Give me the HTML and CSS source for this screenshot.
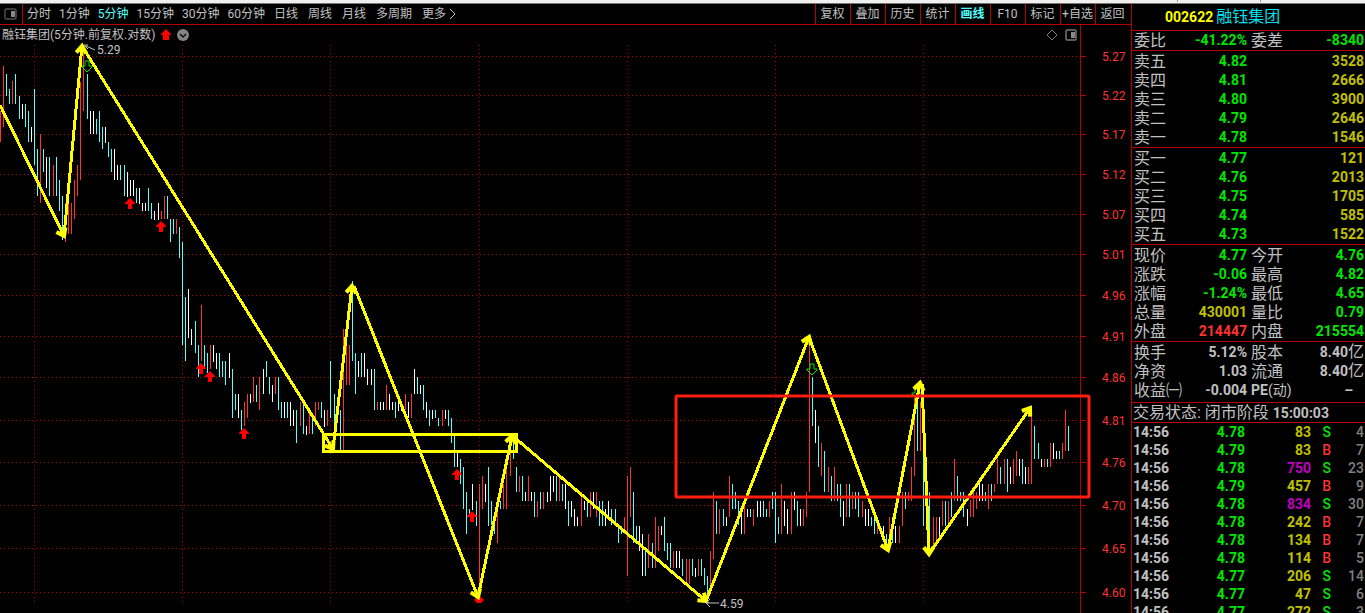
FILE: index.html
```html
<!DOCTYPE html>
<html lang="zh-CN">
<head>
<meta charset="utf-8">
<title>融钰集团 002622</title>
<link rel="stylesheet" href="styles.css">
</head>
<body>
<div class="strip"><i class="notch"></i><i class="notch"></i></div>
<div class="app">
  <main class="main">
    <nav class="toolbar">
      <button class="panel-btn" aria-label="面板"><svg width="14" height="12" viewBox="0 0 14 12"><rect x="1" y="1" width="11" height="10" rx="1" fill="none" stroke="#777"/><rect x="7" y="3" width="4" height="6" fill="#888"/></svg></button>
      <div class="periods minutes">
        <button>分时</button><button>1分钟</button><button class="active">5分钟</button><button>15分钟</button><button>30分钟</button><button>60分钟</button>
      </div>
      <div class="periods days">
        <button>日线</button><button>周线</button><button>月线</button><button>多周期</button><button class="more">更多<svg width="7" height="10" viewBox="0 0 7 10"><path d="M1 0l5 5-5 5" fill="none" stroke="#c0c0c0"/></svg></button>
      </div>
      <div class="tools">
        <button>复权</button><button>叠加</button><button>历史</button><button>统计</button><button class="active strong">画线</button><button>F10</button><button>标记</button><button>+自选</button><button>返回</button>
      </div>
    </nav>
    <header class="chart-head">
      <div class="chart-title">
        <span>融钰集团(5分钟.前复权.对数)</span>
        <svg width="10" height="12" viewBox="0 0 10 12"><path d="M5 0l5 5v1H8v5H2V6H0V5z" fill="#f00"/></svg>
        <svg width="12" height="12" viewBox="0 0 12 12"><circle cx="6" cy="6" r="6" fill="#858585"/><path d="M3 5l3 3 3-3" fill="none" stroke="#111" stroke-width="1.5"/></svg>
        <span class="head-icons">
          <svg width="12" height="12" viewBox="0 0 12 12"><path d="M6 1l5 5-5 5-5-5z" fill="none" stroke="#777"/></svg>
          <svg width="12" height="12" viewBox="0 0 12 12"><rect x="1" y="1" width="10" height="10" rx="1" fill="none" stroke="#777" stroke-width="1.5"/><rect x="6" y="3" width="4" height="6" fill="#888"/></svg>
        </span>
      </div>
    </header>
    <svg class="chart" viewBox="0 45 1131 568">
      <defs>
        <marker id="head" orient="auto" markerUnits="userSpaceOnUse" markerWidth="20" markerHeight="20" viewBox="-10 -10 20 20">
          <path d="M-7 -5L0 0L-7 5" fill="none" stroke="#ff0" stroke-width="4"/>
        </marker>
        <path id="up" d="M0 0l5 5v1h-3v5h-4v-5h-3v-1z"/>
        <path id="down" d="M-2 0h4v5h3v1l-5 5-5-5v-1h3z"/>
      </defs>
      <g id="grid"></g>
      <g id="axis"></g>
      <g id="bars"></g>
      <g class="buy">
        <use href="#up" x="130" y="198"/><use href="#up" x="161" y="221"/><use href="#up" x="201" y="363"/><use href="#up" x="210" y="371"/><use href="#up" x="244" y="428"/><use href="#up" x="457" y="469"/><use href="#up" x="472" y="511"/><path d="M474 600l5-5 5 5-3 3h-4z"/>
      </g>
      <g class="sell">
        <use href="#down" x="87" y="61"/><use href="#down" x="812" y="364"/><use href="#down" x="917" y="388"/>
      </g>
      <g class="trend">
        <path d="M0 105L64 236"/><path d="M64 236L82 46"/><path d="M82 46L333 449"/><path d="M333 449L352 286"/><path d="M354 286L478 597"/><path d="M478 597L512 436"/><path d="M514 437L706 601"/><path d="M706 601L809 337"/><path d="M809 337L888 550"/><path d="M888 550L920 383"/><path d="M922 384L929 554"/><path d="M929 554L1030 408"/>
      </g>
      <rect class="box-yellow" x="323" y="434" width="193" height="17"/>
      <rect class="box-red" x="676" y="396" width="413" height="101" rx="1"/>
      <g class="note">
        <path d="M84 45h4M84 45l4 4M86 46l9 4M706 603h13M710 599l-4 4 4 4"/>
        <text x="97" y="54">5.29</text><text x="720" y="608">4.59</text>
      </g>
    </svg>
  </main>
  <aside class="side">
    <h1 class="stock"><b>002622</b><span>融钰集团</span></h1>
    <table class="quotes ratio">
      <tr><th>委比</th><td class="g">-41.22%</td><th>委差</th><td class="g">-8340</td></tr>
    </table>
    <table class="quotes">
      <tr><th>卖五</th><td class="g">4.82</td><th></th><td class="y">3528</td></tr>
      <tr><th>卖四</th><td class="g">4.81</td><th></th><td class="y">2666</td></tr>
      <tr><th>卖三</th><td class="g">4.80</td><th></th><td class="y">3900</td></tr>
      <tr><th>卖二</th><td class="g">4.79</td><th></th><td class="y">2646</td></tr>
      <tr><th>卖一</th><td class="g">4.78</td><th></th><td class="y">1546</td></tr>
    </table>
    <table class="quotes">
      <tr><th>买一</th><td class="g">4.77</td><th></th><td class="y">121</td></tr>
      <tr><th>买二</th><td class="g">4.76</td><th></th><td class="y">2013</td></tr>
      <tr><th>买三</th><td class="g">4.75</td><th></th><td class="y">1705</td></tr>
      <tr><th>买四</th><td class="g">4.74</td><th></th><td class="y">585</td></tr>
      <tr><th>买五</th><td class="g">4.73</td><th></th><td class="y">1522</td></tr>
    </table>
    <table class="quotes">
      <tr><th>现价</th><td class="g">4.77</td><th>今开</th><td class="g">4.76</td></tr>
      <tr><th>涨跌</th><td class="g">-0.06</td><th>最高</th><td class="g">4.82</td></tr>
      <tr><th>涨幅</th><td class="g">-1.24%</td><th>最低</th><td class="g">4.65</td></tr>
      <tr><th>总量</th><td class="y">430001</td><th>量比</th><td class="g">0.79</td></tr>
      <tr><th>外盘</th><td class="r">214447</td><th>内盘</th><td class="g">215554</td></tr>
    </table>
    <table class="quotes last">
      <tr><th>换手</th><td>5.12%</td><th>股本</th><td>8.40<span class="unit">亿</span></td></tr>
      <tr><th>净资</th><td>1.03</td><th>流通</th><td>8.40<span class="unit">亿</span></td></tr>
      <tr><th>收益㈠</th><td>-0.004</td><th class="pe"><b>PE</b>(动)</th><td class="none">–</td></tr>
    </table>
    <p class="status">交易状态: 闭市阶段 <b>15:00:03</b></p>
    <table class="ticks">
      <tr><td>14:56</td><td>4.78</td><td>83</td><td class="g">S</td><td>4</td></tr>
      <tr><td>14:56</td><td>4.79</td><td>83</td><td class="r">B</td><td>7</td></tr>
      <tr><td>14:56</td><td>4.78</td><td class="m">750</td><td class="g">S</td><td>23</td></tr>
      <tr><td>14:56</td><td>4.79</td><td>457</td><td class="r">B</td><td>9</td></tr>
      <tr><td>14:56</td><td>4.78</td><td class="m">834</td><td class="g">S</td><td>30</td></tr>
      <tr><td>14:56</td><td>4.78</td><td>242</td><td class="r">B</td><td>7</td></tr>
      <tr><td>14:56</td><td>4.78</td><td>134</td><td class="r">B</td><td>7</td></tr>
      <tr><td>14:56</td><td>4.78</td><td>114</td><td class="r">B</td><td>5</td></tr>
      <tr><td>14:56</td><td>4.77</td><td>206</td><td class="g">S</td><td>14</td></tr>
      <tr><td>14:56</td><td>4.77</td><td>47</td><td class="g">S</td><td>6</td></tr>
      <tr><td>14:56</td><td>4.77</td><td>272</td><td class="g">S</td><td>3</td></tr>
    </table>
  </aside>
</div>
<script src="chart.js"></script>
</body>
</html>
```
FILE: styles.css
```css
* { box-sizing: border-box; }
body {
  margin: 0;
  height: 100vh;
  overflow: hidden;
  display: flex;
  flex-direction: column;
  background: #000;
  color: #c0c0c0;
  font: 12px/16px Roboto, "Noto Sans CJK SC", sans-serif;
}
button {
  margin: 0;
  padding: 0;
  border: 0;
  background: none;
  color: inherit;
  font: inherit;
  white-space: nowrap;
}
.strip {
  flex: none;
  height: 4px;
  background: #f0f0f0;
  border-bottom: 1px solid #777;
  display: flex;
  justify-content: flex-end;
  gap: 82px;
  padding-right: 104px;
}
.notch { width: 1px; height: 2px; background: #999; }
.app { flex: 1; min-height: 0; display: flex; }
.main { flex: 1; min-width: 0; display: flex; flex-direction: column; }

.toolbar {
  flex: none;
  height: 21px;
  display: flex;
  border-bottom: 1px solid #b40000;
}
.panel-btn {
  width: 23px;
  border-right: 1px solid #b40000;
  display: flex;
  align-items: center;
  justify-content: center;
}
.periods { display: flex; }
.minutes { gap: 8px; padding-left: 4px; }
.days { gap: 10px; padding-left: 9px; }
.more { display: flex; align-items: center; gap: 3px; }
.tools { margin-left: auto; padding-right: 1px; display: flex; }
.tools button { width: 35px; padding-right: 1px; border-left: 1px solid #b40000; }
.active { color: #54ffff; }
.strong { font-weight: bold; }

.chart-head { flex: none; height: 20px; padding-right: 50px; }
.chart-title {
  height: 20px;
  display: flex;
  align-items: center;
  gap: 6px;
  padding: 0 3px 0 2px;
  border-right: 1px solid #b40000;
}
.head-icons { margin-left: auto; display: flex; gap: 7px; }

.chart { display: block; width: 100%; height: auto; overflow: visible; }
#grid, #axis, #bars, .trend, .box-yellow { shape-rendering: crispEdges; }
.dots { stroke: #b00000; stroke-width: 1; stroke-dasharray: 1 3; }
.line { fill: #b40000; }
.price { fill: #ff3232; }
.bar-r { fill: #ff3232; }
.bar-c { fill: #54ffff; }
.bar-w { fill: #fff; }
.buy { fill: #f00; }
.sell { fill: none; stroke: #00e600; }
.trend { stroke: #ff0; stroke-width: 3; }
.trend path { marker-end: url(#head); }
.box-yellow { fill: none; stroke: #ff0; stroke-width: 3; }
.box-red { fill: none; stroke: #ff1e10; stroke-width: 3; }
.note { fill: #c0c0c0; }
.note path { fill: none; stroke: #c0c0c0; }

.side {
  flex: none;
  width: 234px;
  border-left: 1px solid #b40000;
  overflow: hidden;
}
.stock {
  margin: 0;
  height: 26px;
  padding-left: 33px;
  display: flex;
  align-items: center;
  gap: 3px;
  font-size: 16px;
  font-weight: normal;
  color: #00e0f0;
}
.stock b { font-size: 14px; color: #ff0; }
.quotes, .ticks {
  width: 100%;
  table-layout: fixed;
  border-collapse: separate;
  border-spacing: 0;
  border-top: 1px solid #b40000;
}
.quotes { padding: 1px 0 0; }
.ratio { padding: 0; }
.last { padding-bottom: 2px; }
.quotes th, .quotes td {
  height: 19px;
  padding: 0;
  line-height: 19px;
  white-space: nowrap;
}
.quotes th {
  width: 40px;
  padding-left: 4px;
  font-size: 16px;
  font-weight: normal;
  text-align: left;
}
.quotes th:first-child { width: 50px; padding-left: 2px; }
.quotes td:nth-child(2) { width: 65px; }
.quotes td {
  padding-right: 1px;
  font-size: 14px;
  font-weight: bold;
  text-align: right;
}
.quotes td:nth-child(2) { padding-right: 0; }
.quotes .unit { font-size: 16px; font-weight: normal; line-height: 1; }
.quotes .pe { font-size: 14px; }
.quotes .none { padding-right: 12px; }
.status {
  margin: 0;
  height: 20px;
  padding-left: 1px;
  border-top: 1px solid #b40000;
  font-size: 16px;
  line-height: 19px;
  white-space: nowrap;
}
.status b { font-size: 14px; }
.ticks td {
  height: 18px;
  padding: 0;
  font-size: 14px;
  font-weight: bold;
  line-height: 18px;
  text-align: right;
}
.ticks td:nth-child(1) { width: 48px; padding-left: 1px; text-align: left; }
.ticks td:nth-child(2) { width: 65px; color: #00e600; }
.ticks td:nth-child(3) { width: 66px; color: #c0c000; }
.ticks td:nth-child(4) { width: 20px; font-weight: 500; }
.ticks td:nth-child(5) { padding-right: 1px; color: #808080; font-weight: 500; }
.quotes .g, .ticks .g { color: #00e600; }
.quotes .y { color: #c0c000; }
.quotes .r, .ticks .r { color: #ff3232; }
.ticks td.m { color: #c000c0; }
```
FILE: chart.js
```js
const NS = "http://www.w3.org/2000/svg";
function add(parent, name, attrs, text) {
  const el = document.createElementNS(NS, name);
  for (const key in attrs) el.setAttribute(key, attrs[key]);
  if (text) el.textContent = text;
  parent.appendChild(el);
}

const grid = document.getElementById("grid");
const axis = document.getElementById("axis");
const levels = [[56, "5.27"], [95, "5.22"], [134, "5.17"], [174, "5.12"], [214, "5.07"], [254, "5.01"], [295, "4.96"],
  [336, "4.91"], [377, "4.86"], [420, "4.81"], [462, "4.76"], [505, "4.70"], [548, "4.65"], [592, "4.60"]];
add(axis, "rect", { x: 1080, y: 45, width: 1, height: 568, class: "line" });
for (const [y, label] of levels) {
  add(grid, "path", { d: `M0 ${y + 0.5}H1080`, class: "dots" });
  add(axis, "rect", { x: 1081, y, width: 5, height: 1, class: "line" });
  add(axis, "text", { x: 1102, y: y + 5, class: "price" }, label);
}
for (const x of [34, 182, 330, 479, 627, 775, 923]) {
  add(grid, "path", { d: `M${x + 0.5} 45V603`, class: "dots" });
}

// colour, x, high, low
const data = `r0,111,142 r3,66,127 c6,74,96 c9,89,104 r12,81,104 c15,74,104 c19,96,119 w22,104,119 c25,104,127 c28,111,142 w31,127,142
c34,89,165 c37,149,196 r40,134,203 c43,149,172 w46,157,188 c49,157,196 r53,165,196 c56,157,196 c59,180,211 c62,196,240 r65,203,242
r68,203,234 r71,203,234 r74,180,219 r77,165,196 r80,82,180 r83,50,111 c87,74,119 w90,111,134 w93,111,134 c96,119,134 c99,111,142
c102,127,149 w105,127,143 c108,142,157 c111,149,172 w114,149,180 w117,165,180 c120,165,180 c124,165,196 w127,172,197 w130,180,196
w133,180,196 c136,188,203 w139,188,204 w142,203,211 w145,203,211 c148,188,211 c151,203,219 w154,211,220 w158,203,220 r161,211,219
r164,196,219 c167,196,219 c170,219,242 c173,219,234 r176,219,234 c179,227,258 c182,242,345 c185,297,361 w188,289,338 w191,329,345
c195,321,353 c198,345,377 r201,305,361 c204,345,367 c207,353,373 r210,345,369 w213,345,362 w216,353,369 c219,353,377 c222,361,377
c225,361,385 w229,353,378 c232,369,418 c235,394,410 w238,394,418 c241,410,430 r244,402,426 r247,394,418 w250,394,403 r253,377,402
c256,385,402 r259,377,410 w263,369,394 c266,361,377 c269,377,394 w272,385,402 r275,377,394 c278,377,410 c281,402,418 w284,402,418
c287,402,418 w290,402,426 w293,410,426 c296,410,443 r300,402,426 c303,402,434 w306,426,435 r309,410,434 c312,418,434 r315,402,426
r318,402,410 c321,402,418 w324,410,427 r327,410,426 c330,361,418 c334,394,430 c340,410,450 r343,329,450 r346,337,385 r349,345,385
c352,281,361 c355,353,394 w358,361,377 c361,353,377 w364,353,377 w367,369,385 w371,369,385 c374,369,410 r377,402,410 w380,402,410
w383,402,410 r386,385,410 w389,394,410 w392,402,410 c395,402,418 w398,402,411 w401,402,411 r405,394,410 w408,402,418 r411,394,418
w414,369,394 c417,377,394 w420,385,394 c423,385,410 w426,402,418 c429,410,426 w432,410,419 c435,410,418 c438,418,426 r442,410,426
w445,410,419 c448,410,426 c451,418,443 c454,434,467 w457,453,467 c460,459,484 c463,467,509 c466,492,534 c469,509,517 w472,484,510
c476,501,526 r479,484,590 r482,476,509 w485,484,502 c488,467,526 c491,501,525 c494,517,534 r497,505,543 c500,501,509 r503,484,509
r506,459,509 r510,443,476 c513,443,459 c516,467,492 r519,476,492 c522,476,501 w525,492,501 r528,476,501 w531,492,501 c534,492,517
r537,501,517 c540,492,509 r543,492,509 w547,492,502 w550,476,501 w553,476,492 c556,476,501 r559,476,501 c562,484,501 w565,484,509
c568,501,526 w571,501,517 w574,509,526 w577,517,526 r581,492,526 w584,501,510 c587,501,517 r590,492,517 w593,492,509 r596,492,517
c599,501,526 c602,501,526 w605,509,526 w608,501,517 c611,509,525 c615,509,526 c618,526,543 c621,526,534 r624,517,534 r627,476,576
r630,467,517 c633,492,543 c636,526,543 w639,526,551 w642,534,576 c645,548,576 r648,534,568 c652,543,568 r655,517,568 r658,526,551
w661,526,535 c664,517,551 c667,543,560 c670,543,568 r673,551,568 w676,551,568 w679,551,568 c682,559,576 r686,559,584 r689,559,584
c692,559,576 w695,568,577 r698,559,576 c701,559,576 c704,568,585 c707,576,600 r710,551,590 r713,492,559 c716,501,534 r719,509,534
c723,509,526 w726,517,526 r729,476,517 c732,484,509 c735,492,509 c738,501,525 w741,509,534 r744,500,534 w747,509,517 c750,509,517
r753,509,526 w757,501,517 w760,501,517 c763,501,517 c766,509,517 r769,501,517 c772,492,509 c775,492,543 c778,517,534 r781,484,534
w784,501,526 w787,509,534 r791,492,534 w794,492,510 c797,501,526 w800,509,526 r803,509,526 r806,492,517 r809,345,492 c812,377,426
w815,410,443 c818,426,467 r821,443,476 c824,451,492 r828,467,492 c831,476,501 r834,467,501 c837,484,501 c840,484,517 w843,501,526
r846,484,517 c849,484,517 r852,492,509 c855,492,509 c858,492,517 r862,501,517 w865,509,526 w868,509,526 c871,517,526 c874,517,534
r877,526,534 w880,526,534 w883,526,542 c886,534,550 r889,517,543 c892,517,543 w895,526,543 r899,526,543 r902,492,526 c905,492,509
r908,492,501 r911,467,501 r914,398,476 c917,402,451 r920,402,451 c923,455,526 c929,492,547 r933,517,547 r936,517,543 w939,517,540
r942,501,526 c945,501,526 r948,501,526 c951,492,517 r954,459,501 c957,476,501 c960,492,501 c963,492,517 w967,509,526 r970,500,517
r973,492,517 r976,492,509 w979,484,501 w982,484,501 c985,492,501 r988,484,509 c991,484,501 r994,484,492 r997,459,484 c1000,467,484
r1004,459,484 c1007,459,492 w1010,467,484 r1013,459,484 r1016,451,476 w1019,459,476 c1022,459,484 w1025,467,484 r1028,467,484
r1031,410,484 c1034,426,459 c1038,443,459 w1041,459,467 r1044,459,467 c1047,459,467 r1050,443,467 w1053,443,459 w1056,451,459
c1059,451,459 r1062,443,459 r1065,410,451 c1068,426,451`;
const bars = document.getElementById("bars");
for (const item of data.split(/\s+/)) {
  const [x, high, low] = item.slice(1).split(",").map(Number);
  add(bars, "rect", { x, y: high, width: 1, height: low - high, class: "bar-" + item[0] });
}
```
